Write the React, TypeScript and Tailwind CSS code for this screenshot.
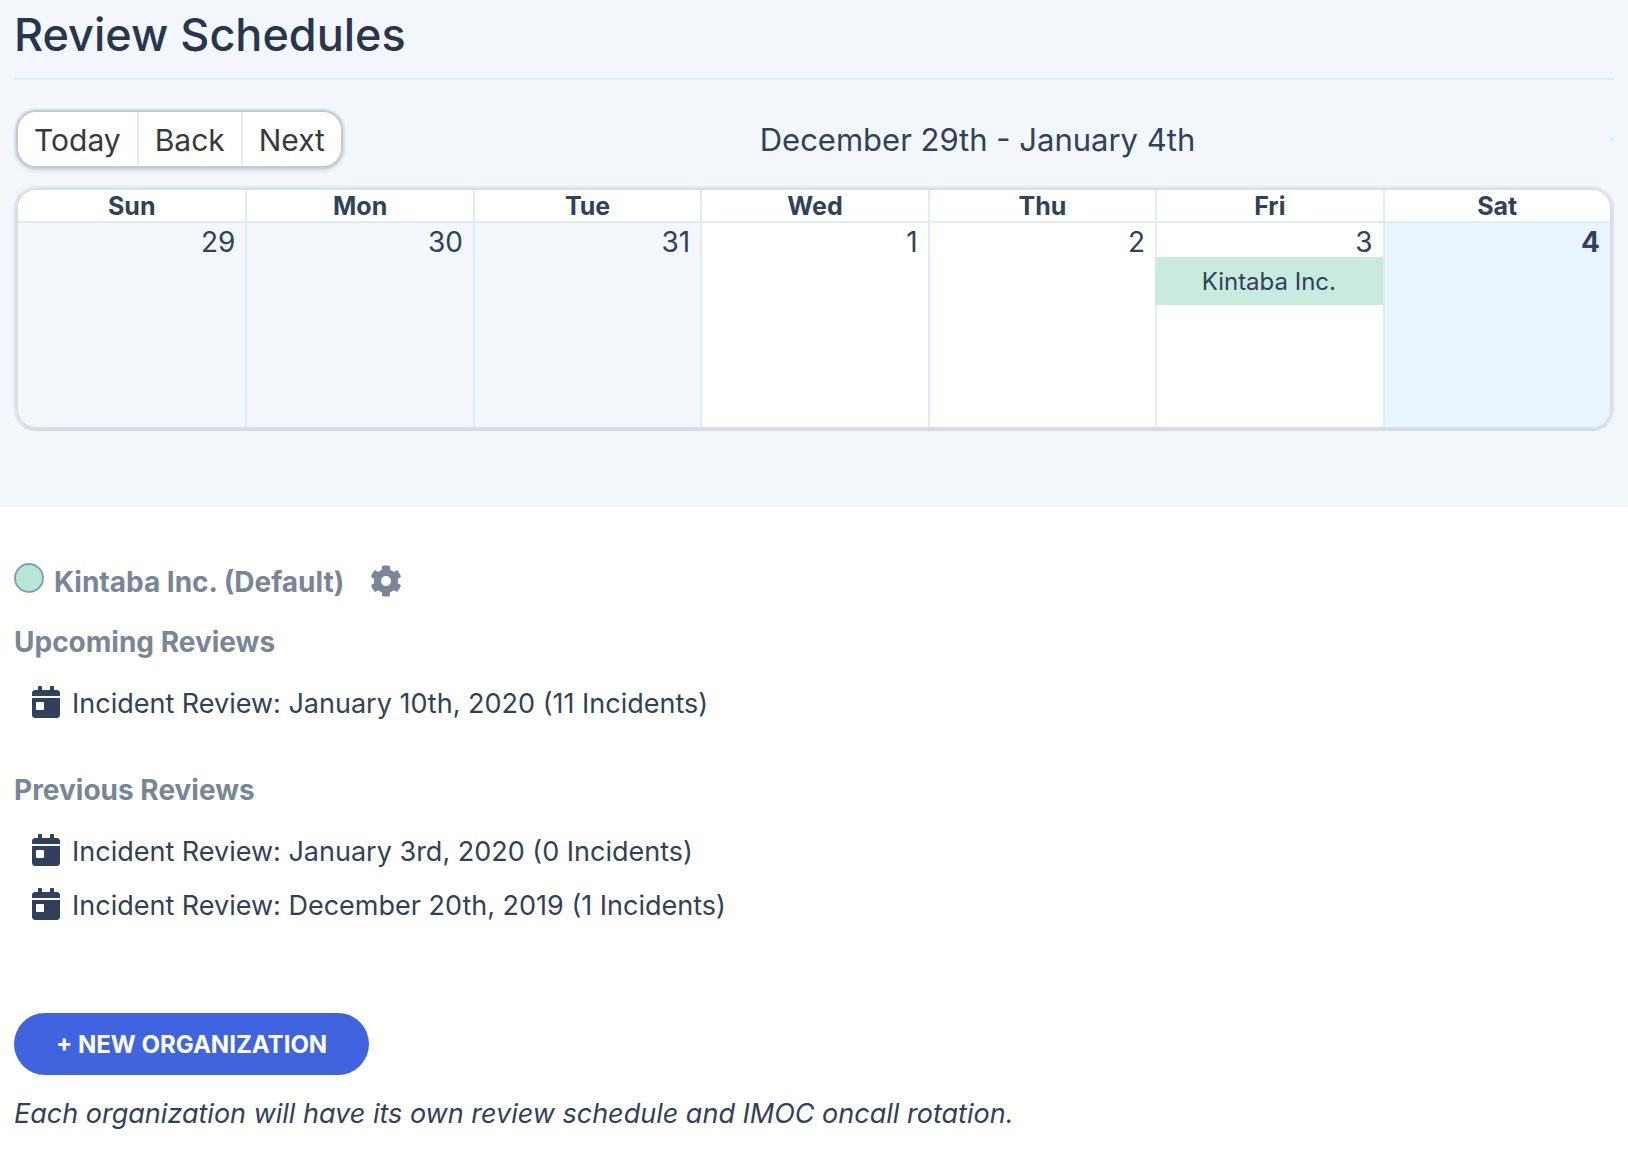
import { FaCalendarDay, FaCog } from 'react-icons/fa';

const days = [
  { name: 'Sun', date: '29', cell: 'font-normal' },
  { name: 'Mon', date: '30', cell: 'font-normal' },
  { name: 'Tue', date: '31', cell: 'font-normal' },
  { name: 'Wed', date: '1', cell: 'bg-[#fffffe]' },
  { name: 'Thu', date: '2', cell: 'bg-[#fffffe]' },
  { name: 'Fri', date: '3', cell: 'bg-[#fffffe]', event: 'Kintaba Inc.' },
  { name: 'Sat', date: '4', cell: 'bg-[#e8f5ff] font-bold' },
];

const upcoming = ['Incident Review: January 10th, 2020 (11 Incidents)'];

const previous = [
  'Incident Review: January 3rd, 2020 (0 Incidents)',
  'Incident Review: December 20th, 2019 (1 Incidents)',
];

const Toolbar = () => (
  <div className="flex items-center justify-between">
    <div className="flex h-[62px] rounded-[22px] border-2 border-[#deebf8]">
      <div className="flex divide-x-2 divide-[#deebf8] overflow-hidden rounded-[20px] border-2 border-[#c8c8c8] bg-[#fffffe] text-[30px] text-[#373a3c] shadow-[0_2px_4px_rgba(50,50,93,0.15)]">
        <button type="button" className="px-4 pt-[2px]">Today</button>
        <button type="button" className="px-4 pt-[2px]">Back</button>
        <button type="button" className="px-4 pt-[2px]">Next</button>
      </div>
    </div>
    <div className="pt-[2px] text-[31px]">December 29th - January 4th</div>
    <div className="border-2 border-[#deebf8]" />
  </div>
);

const Calendar = () => (
  <div className="overflow-hidden rounded-[22px] border-2 border-[#d8e5f1] border-t-[#deebf8] border-b-[#d0dce9]">
    <div className="overflow-hidden rounded-[20px] border-2 border-[#dddddd]">
      <table className="w-full table-fixed border-separate border-spacing-0">
        <thead>
          <tr className="bg-[#fffffe]">
            {days.map((day) => (
              <th
                key={day.name}
                className="h-[33px] border-b-2 border-l-2 border-[#deebf8] p-0 pt-[2px] text-[25px] leading-[29px] font-bold first:border-l-0"
              >
                {day.name}
              </th>
            ))}
          </tr>
        </thead>
        <tbody>
          <tr>
            {days.map((day) => (
              <td
                key={day.name}
                className={`h-[204px] border-l-2 border-[#deebf8] p-0 align-top first:border-l-0 ${day.cell}`}
              >
                <div className="h-[34px] pr-[10px] text-right text-[28px] leading-[38px]">{day.date}</div>
                {day.event && (
                  <div className="-ml-[2px] bg-[#c9ebde] pt-[2px] text-center text-[24px] leading-[46px]">{day.event}</div>
                )}
              </td>
            ))}
          </tr>
        </tbody>
      </table>
    </div>
  </div>
);

const ReviewList = ({ title, reviews }: { title: string; reviews: string[] }) => (
  <section>
    <h3 className="text-[28px] leading-[34px] font-bold text-[#778699]">{title}</h3>
    <ul className="mt-[18px] pl-[18px]">
      {reviews.map((review) => (
        <li key={review} className="flex h-[54px] items-center text-[27px]">
          <FaCalendarDay className="mr-[12px] mb-[4px] h-[32px] w-[28px]" />
          <a href="#">{review}</a>
        </li>
      ))}
    </ul>
  </section>
);

const App = () => {
  return (
    <div className="min-h-screen bg-[#fffffe] font-['Inter',sans-serif] text-[#30415d]">
      <div className="bg-[#f3f6fb] px-[14px] pb-[76px]">
        <h1 className="h-[80px] border-b-2 border-[#deebf8] text-[45px] leading-[70px] font-medium text-[#27364e]">
          Review Schedules
        </h1>
        <div className="mt-[28px] mb-[16px]">
          <Toolbar />
        </div>
        <Calendar />
      </div>

      <div className="px-[14px] pt-[56px] pb-8">
        <h2 className="flex h-[38px] items-center text-[28px] font-bold text-[#778699]">
          <span className="mr-[10px] mb-[8px] h-[30px] w-[30px] rounded-full border-2 border-[#809fc0] bg-[#b7e7d5]" />
          Kintaba Inc. (Default)
          <button type="button" aria-label="Settings" className="mb-[2px] ml-[26px]">
            <FaCog className="h-[32px] w-[32px]" />
          </button>
        </h2>

        <div className="mt-[24px] mb-[42px]">
          <ReviewList title="Upcoming Reviews" reviews={upcoming} />
        </div>
        <ReviewList title="Previous Reviews" reviews={previous} />

        <button
          type="button"
          className="mt-[80px] h-[62px] rounded-full bg-[#4063e0] px-[42px] pt-[2px] text-[24px] font-bold text-white uppercase"
        >
          + New Organization
        </button>
        <p className="mt-[20px] text-[27px] leading-[38px] italic">
          Each organization will have its own review schedule and IMOC oncall rotation.
        </p>
      </div>
    </div>
  );
};

export default App;
